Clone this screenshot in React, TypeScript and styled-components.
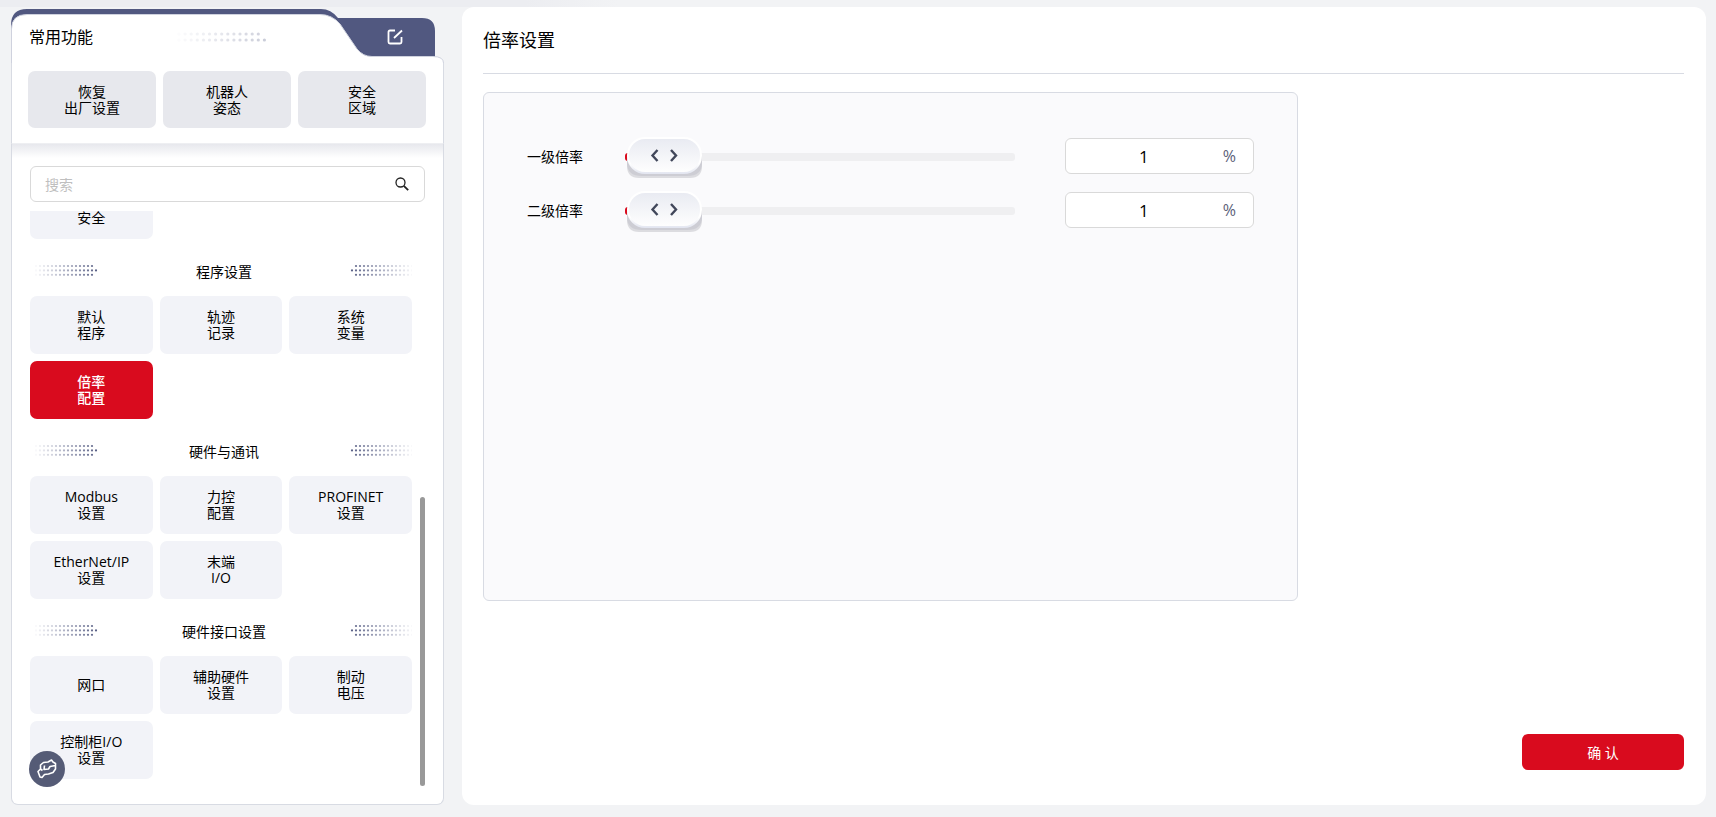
import React, { useState } from "react";
import styled, { createGlobalStyle } from "styled-components";

const GlobalStyle = createGlobalStyle`
  * { box-sizing: border-box; }
  body {
    margin: 0;
    background: #f2f3f5;
    color: #000;
    font-family: "Open Sans", "Noto Sans CJK SC", sans-serif;
    font-size: 14px;
  }
  button, input { font: inherit; color: inherit; }
  h1, h2, h3 { margin: 0; font-weight: 400; }
`;

const Page = styled.div`
  position: relative;
  display: flex;
  gap: 18px;
  height: 100vh;
  min-height: 600px;
  padding: 7px 10px 12px 11px;
`;

const TopShade = styled.div`
  position: absolute;
  top: 0;
  left: 0;
  width: 36%;
  height: 7px;
  background: linear-gradient(90deg, #ecedf1 85%, #f2f3f5);
`;

const Sidebar = styled.aside`
  display: flex;
  flex-direction: column;
  flex: none;
  width: 433px;
  padding-top: 2px;
`;

const Folder = styled.header`
  position: relative;
  display: flex;
  align-items: center;
  flex: none;
  height: 54px;
  padding: 2px 24px 0 18px;
`;

const FolderShape = styled.svg`
  position: absolute;
  top: 0;
  left: 0;
`;

const FolderTitle = styled.h2`
  position: relative;
  flex: 1;
  font-size: 16px;
  line-height: 24px;
`;

const FolderDots = styled.svg`
  position: relative;
  margin-right: 116px;
`;

const EditButton = styled.button`
  position: relative;
  display: flex;
  padding: 4px;
  margin-right: 13px;
  border: 0;
  background: none;
`;

const Shortcuts = styled.div`
  display: grid;
  grid-template-columns: repeat(3, 1fr);
  gap: 7px;
  padding: 8px 17px 15px 16px;
  background: #fff;
  border: solid #d8dbe3;
  border-width: 0 1px;
`;

const Tile = styled.button<{ $tone?: "grey" | "active" }>`
  height: ${(p) => (p.$tone === "grey" ? 57 : 58)}px;
  padding: 0;
  border: 0;
  border-radius: 7px;
  line-height: 16px;
  white-space: pre-line;
  background: ${(p) =>
    p.$tone === "active" ? "#d90b1e" : p.$tone === "grey" ? "#e7e8ed" : "#f2f3f8"};
  color: ${(p) => (p.$tone === "active" ? "#fff" : "#000")};
  font-weight: ${(p) => (p.$tone === "active" ? 500 : 400)};
`;

const Menu = styled.nav`
  display: flex;
  flex-direction: column;
  flex: 1;
  min-height: 0;
  padding: 22px 18px 18px 18px;
  background: linear-gradient(#e7e8ed, #fff 14px);
  border: 1px solid #d8dbe3;
  border-top-color: #eeeff2;
  border-radius: 0 0 7px 7px;
`;

const SearchBox = styled.label`
  display: flex;
  align-items: center;
  flex: none;
  height: 36px;
  padding: 0 15px 0 14px;
  background: #fff;
  border: 1px solid #d9d9d9;
  border-radius: 6px;
`;

const SearchInput = styled.input`
  flex: 1;
  min-width: 0;
  padding: 0;
  border: 0;
  outline: 0;
  background: none;
  &::placeholder { color: #bfbfbf; opacity: 1; }
`;

const Scroller = styled.div`
  display: flex;
  flex: 1;
  gap: 8px;
  min-height: 0;
  margin-top: 9px;
`;

const Sections = styled.div`
  display: flex;
  flex-direction: column;
  justify-content: flex-end;
  flex: 1;
  padding-bottom: 7px;
  overflow: hidden;
`;

const ScrollRail = styled.div`
  display: flex;
  align-items: flex-end;
  width: 5px;
`;

const ScrollThumb = styled.div`
  width: 100%;
  height: calc(50% + 2px);
  border-radius: 3px;
  background: #999;
`;

const SectionHead = styled.div`
  display: flex;
  align-items: center;
  justify-content: space-between;
  flex: none;
  height: 57px;
  padding-left: 4px;
  margin-right: -2px;
`;

const SectionTitle = styled.h3`
  font-size: 14px;
  line-height: 20px;
  padding-top: 8px;
`;

const SectionDots = styled.svg`
  margin-top: 6px;
`;

const TileGrid = styled.div`
  display: grid;
  flex: none;
  grid-template-columns: repeat(3, 1fr);
  gap: 7px;
`;

const FloatButton = styled.button`
  position: absolute;
  left: 29px;
  bottom: 30px;
  display: flex;
  align-items: center;
  justify-content: center;
  width: 36px;
  height: 36px;
  padding: 0;
  border: 0;
  border-radius: 50%;
  background: #555b76;
`;

const Content = styled.main`
  display: flex;
  position: relative;
  flex-direction: column;
  flex: 1;
  min-width: 0;
  padding: 0 22px 35px 21px;
  background: #fff;
  border-radius: 12px;
`;

const ContentTitle = styled.h1`
  padding: 21px 0;
  border-bottom: 1px solid #d8dbe3;
  font-size: 18px;
  line-height: 24px;
`;

const Form = styled.form`
  display: flex;
  flex-direction: column;
  gap: 18px;
  width: 68%;
  min-width: 640px;
  max-width: 815px;
  height: 509px;
  margin-top: 18px;
  padding: 45px 43px;
  background: #fafafc;
  border: 1px solid #d8dbe3;
  border-radius: 6px;
`;

const Field = styled.div`
  display: flex;
  align-items: center;
`;

const FieldLabel = styled.label`
  width: 98px;
  padding-top: 2px;
  line-height: 20px;
`;

const Slider = styled.div`
  position: relative;
  display: flex;
  align-items: center;
  flex: 1;
  height: 36px;
  padding-top: 2px;
`;

const Range = styled.input`
  appearance: none;
  width: 100%;
  height: 8px;
  margin: 0;
  border-radius: 3px;
  background: linear-gradient(90deg, #d90b1e 8px, #efeff1 8px);
  &::-webkit-slider-thumb {
    appearance: none;
    width: 77px;
    height: 36px;
  }
`;

const Knob = styled.svg`
  position: absolute;
  top: -1px;
  pointer-events: none;
`;

const NumberBox = styled.div`
  display: flex;
  align-items: center;
  width: 189px;
  height: 36px;
  margin-left: 50px;
  padding: 0 17px 0 16px;
  background: #fff;
  border: 1px solid #d9d9d9;
  border-radius: 6px;
`;

const NumberInput = styled.input`
  flex: 1;
  min-width: 0;
  padding: 0;
  border: 0;
  outline: 0;
  background: none;
  font-size: 17px;
  text-align: center;
`;

const Unit = styled.span`
  margin-left: 17px;
  color: #5b6078;
  font-size: 16px;
`;

const Confirm = styled.button`
  align-self: flex-end;
  width: 162px;
  height: 36px;
  margin-top: auto;
  border: 0;
  border-radius: 6px;
  background: #d90b1e;
  color: #fff;
`;

function Dots({ flip }: { flip?: boolean }) {
  const dots = [];
  for (let row = 0; row < 3; row++)
    for (let col = 0; col < (row === 1 ? 16 : 15); col++)
      dots.push(
        <circle key={`${row}-${col}`} cx={2 + col * 4} cy={2 + row * 4.4} r="1.1" opacity={Math.min(1, 0.04 + col * 0.06)} />
      );
  return (
    <SectionDots width="64" height="13" viewBox="0 0 64 13" aria-hidden="true">
      <g fill="#515880" transform={flip ? "translate(64 0) scale(-1 1)" : undefined}>{dots}</g>
    </SectionDots>
  );
}

const sections = [
  { title: "程序设置", items: ["默认\n程序", "轨迹\n记录", "系统\n变量", "倍率\n配置"] },
  { title: "硬件与通讯", items: ["Modbus\n设置", "力控\n配置", "PROFINET\n设置", "EtherNet/IP\n设置", "末端\nI/O"] },
  { title: "硬件接口设置", items: ["网口", "辅助硬件\n设置", "制动\n电压", "控制柜I/O\n设置"] },
];

function RateField({ id, label }: { id: string; label: string }) {
  const [value, setValue] = useState(1);
  const ratio = (value - 1) / 99;
  return (
    <Field>
      <FieldLabel htmlFor={id}>{label}</FieldLabel>
      <Slider>
        <Range type="range" min={1} max={100} value={value} aria-label={label} onChange={(e) => setValue(+e.target.value)} />
        <Knob width="78" height="42" viewBox="0 0 78 42" aria-hidden="true" style={{ left: `calc((100% - 78px) * ${ratio})` }}>
          <defs>
            <linearGradient id={`${id}-face`} x1="0" y1="0" x2="0" y2="1">
              <stop offset="0" stopColor="#e9ebf2" />
              <stop offset="1" stopColor="#fefefe" />
            </linearGradient>
            <linearGradient id={`${id}-rim`} x1="0" y1="0" x2="0" y2="1">
              <stop offset="0.7" stopColor="#fff" />
              <stop offset="1" stopColor="#e2e5f0" />
            </linearGradient>
          </defs>
          <path d="M2 18H77V29Q77 41 65 41H14Q2 41 2 29z" fill="#dcdce0" />
          <path d="M2 18H77V26Q77 39 62 39H17Q2 39 2 26z" fill="#cdcdd4" />
          <rect x="2" y="0" width="75" height="37" rx="18" fill={`url(#${id}-rim)`} />
          <rect x="4" y="2" width="71" height="33" rx="16" fill={`url(#${id}-face)`} />
          <path d="M32.5 13l-5 5.5 5 5.5M46 13l5 5.5-5 5.5" fill="none" stroke="#41475a" strokeWidth="2.4" />
        </Knob>
      </Slider>
      <NumberBox>
        <NumberInput id={id} type="text" value={value} onChange={(e) => setValue(Math.min(100, Math.max(1, +e.target.value || 1)))} />
        <Unit>%</Unit>
      </NumberBox>
    </Field>
  );
}

export default function App() {
  return (
    <>
      <GlobalStyle />
      <Page>
        <TopShade />
        <Sidebar>
          <Folder>
            <FolderShape width="433" height="54" viewBox="0 0 433 54" aria-hidden="true">
              <path d="M0 30V16Q0 0 16 0H310Q320 0 327 9H411Q424 9 424 22V50H0z" fill="#515880" />
              <path d="M.5 54V20Q.5 5.5 16 5.5H309Q321 5.5 329 15L346 40Q352 47.5 361 47.5H422Q432.5 47.5 432.5 54" fill="#fff" stroke="#cfd2de" />
            </FolderShape>
            <FolderTitle>常用功能</FolderTitle>
            <FolderDots width="90" height="10" viewBox="0 0 90 10" aria-hidden="true">
              <g fill="#515880">
                {Array.from({ length: 15 }, (_, i) => (
                  <React.Fragment key={i}>
                    {i < 14 && <circle cx={2 + i * 6.1} cy="2" r="1.6" opacity={0.02 + i * 0.018} />}
                    <circle cx={2 + i * 6.1} cy="8" r="1.6" opacity={0.02 + i * 0.02} />
                  </React.Fragment>
                ))}
              </g>
            </FolderDots>
            <EditButton aria-label="编辑">
              <svg width="16" height="16" viewBox="0 0 16 16" fill="none" stroke="#fff" strokeWidth="1.8" aria-hidden="true">
                <path d="M8 1.5H3Q1.500 1.5 1.5 3V13Q1.5 14.5 3 14.5H13Q14.5 14.5 14.5 13V8M7 9L15 1.5" />
              </svg>
            </EditButton>
          </Folder>
          <Shortcuts>
            {["恢复\n出厂设置", "机器人\n姿态", "安全\n区域"].map((t) => (
              <Tile key={t} $tone="grey">{t}</Tile>
            ))}
          </Shortcuts>
          <Menu>
            <SearchBox>
              <SearchInput type="text" placeholder="搜索" aria-label="搜索" />
              <svg width="14" height="14" viewBox="0 0 14 14" fill="none" stroke="#222" strokeWidth="1.3" aria-hidden="true">
                <circle cx="5.5" cy="5.5" r="4.5" />
                <path d="M8.8 8.8L13.2 13.2" strokeWidth="1.8" />
              </svg>
            </SearchBox>
            <Scroller>
              <Sections>
                <TileGrid>
                  <Tile><br />安全</Tile>
                </TileGrid>
                {sections.map((s) => (
                  <React.Fragment key={s.title}>
                    <SectionHead>
                      <Dots />
                      <SectionTitle>{s.title}</SectionTitle>
                      <Dots flip />
                    </SectionHead>
                    <TileGrid>
                      {s.items.map((t) => (
                        <Tile key={t} $tone={t.startsWith("倍率") ? "active" : undefined}>{t}</Tile>
                      ))}
                    </TileGrid>
                  </React.Fragment>
                ))}
              </Sections>
              <ScrollRail><ScrollThumb /></ScrollRail>
            </Scroller>
          </Menu>
        </Sidebar>
        <Content>
          <ContentTitle>倍率设置</ContentTitle>
          <Form>
            <RateField id="rate-1" label="一级倍率" />
            <RateField id="rate-2" label="二级倍率" />
          </Form>
          <Confirm type="button">确 认</Confirm>
        </Content>
        <FloatButton aria-label="机器人">
          <svg width="20" height="20" viewBox="0 0 20 20" fill="none" stroke="#fff" strokeWidth="1.6" strokeLinejoin="round" aria-hidden="true">
            <path d="M14.5 1L16 3L18.500 4.500V10L16 13.5L11.5 15L7.5 15.500L5 18.5L3 18L1 12.5L3.500 10L3.500 6L6.5 3.500L11 3zM7.500 6.500L7 10.500L11.500 10L13 7.500L18.500 6.500M3.500 10L5.500 11.500" />
          </svg>
        </FloatButton>
      </Page>
    </>
  );
}
